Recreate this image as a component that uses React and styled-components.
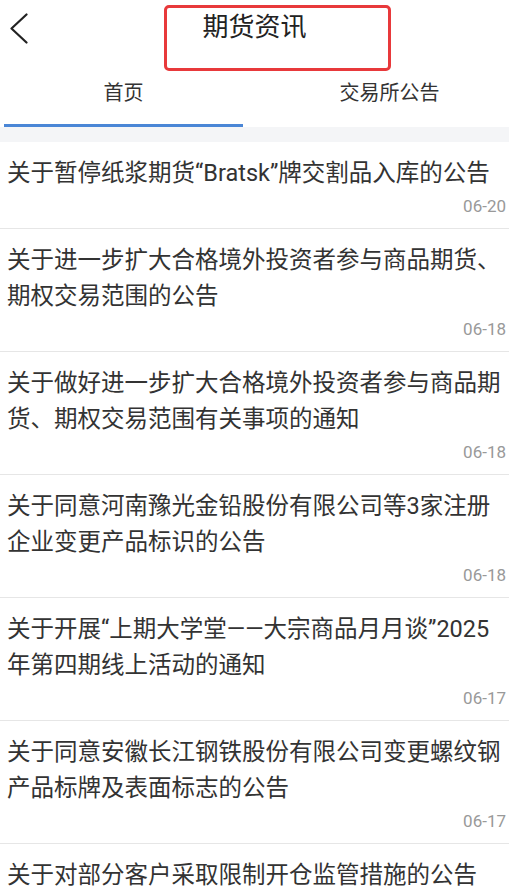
import React from 'react'
import styled, { createGlobalStyle } from 'styled-components'

const GlobalStyle = createGlobalStyle`
  html, body {
    margin: 0;
    padding: 0;
    background: #ffffff;
    overflow: hidden;
  }
  * { box-sizing: border-box; }
`

const notices = [
  { title: '关于暂停纸浆期货“Bratsk”牌交割品入库的公告', date: '06-20' },
  { title: '关于进一步扩大合格境外投资者参与商品期货、期权交易范围的公告', date: '06-18' },
  { title: '关于做好进一步扩大合格境外投资者参与商品期货、期权交易范围有关事项的通知', date: '06-18' },
  { title: '关于同意河南豫光金铅股份有限公司等3家注册企业变更产品标识的公告', date: '06-18' },
  { title: '关于开展“上期大学堂——大宗商品月月谈”2025年第四期线上活动的通知', date: '06-17' },
  { title: '关于同意安徽长江钢铁股份有限公司变更螺纹钢产品标牌及表面标志的公告', date: '06-17' },
  { title: '关于对部分客户采取限制开仓监管措施的公告', date: '06-17' },
]

export default function App() {
  return (
    <>
      <GlobalStyle />
      <Page>
        <Header>
          <BackButton aria-label="back">
            <svg width="20" height="32" viewBox="0 0 20 32" fill="none">
              <path d="M17.5 1.5 L2.5 15.5 L17.5 29.5" stroke="#222" strokeWidth="2.2" strokeLinecap="round" strokeLinejoin="round" />
            </svg>
          </BackButton>
          <Title>期货资讯</Title>
          <span />
          <Highlight />
        </Header>
        <Tabs>
          <Tab active>首页</Tab>
          <Tab>交易所公告</Tab>
        </Tabs>
        <Gap />
        <List>
          {notices.map((n, i) => (
            <Item key={i}>
              <ItemTitle>{n.title}</ItemTitle>
              <ItemDate>{n.date}</ItemDate>
            </Item>
          ))}
        </List>
      </Page>
    </>
  )
}

const Page = styled.div`
  position: relative;
  height: 100vh;
  overflow: hidden;
  background: #fff;
  font-family: Roboto, "Noto Sans CJK SC", sans-serif;
  color: #333;
`

const Header = styled.div`
  display: grid;
  grid-template-columns: 1fr auto 1fr;
  align-items: center;
  height: 56px;
`

const BackButton = styled.div`
  display: flex;
  align-items: center;
  padding-left: 9px;
  padding-top: 1px;
  height: 56px;
`

const Title = styled.div`
  font-size: 26px;
  line-height: 30px;
  color: #222;
  padding-bottom: 2px;
`

const Highlight = styled.div`
  position: absolute;
  top: 5px;
  left: 164px;
  width: 227px;
  height: 66px;
  border: 3px solid #e8393b;
  border-radius: 5px;
  pointer-events: none;
`

const Tabs = styled.div`
  display: grid;
  grid-template-columns: 239px 239px;
  justify-content: space-between;
  padding-left: 4px;
  height: 71px;
`

const Tab = styled.div`
  display: flex;
  align-items: center;
  justify-content: center;
  font-size: 20px;
  color: #333;
  border-bottom: 3px solid ${p => (p.active ? '#4a86d6' : 'transparent')};
  padding-top: 2px;
`

const Gap = styled.div`
  height: 15px;
  background: #f4f5f7;
`

const List = styled.div`
  display: flex;
  flex-direction: column;
`

const Item = styled.div`
  padding: 13px 3px 10px 7px;
  border-bottom: 1px solid #e6e6e6;
`

const ItemTitle = styled.div`
  font-size: 23.5px;
  line-height: 36px;
  color: #333;
`

const ItemDate = styled.div`
  margin-top: 3px;
  text-align: right;
  font-size: 17px;
  line-height: 24px;
  color: #999;
`
